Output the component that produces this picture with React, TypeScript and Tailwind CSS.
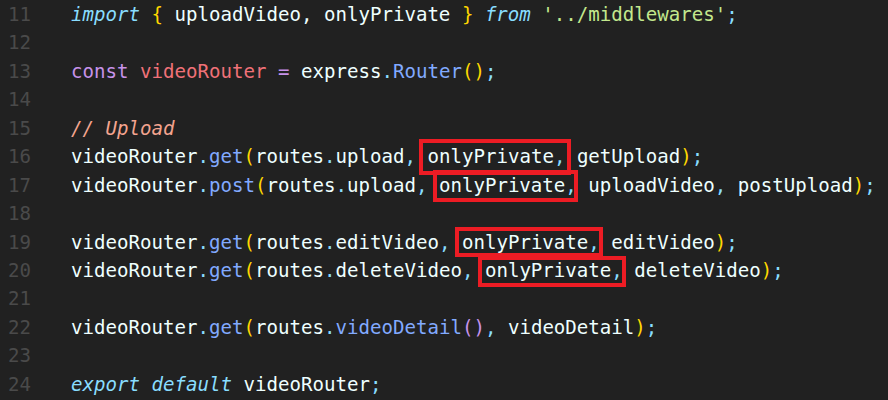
import React from "react";

const W = "text-[#eeffff]";
const KW = "text-[#89ddff] italic";
const P = "text-[#89ddff]";
const FN = "text-[#82aaff]";
const BR = "text-[#ffd700]";
const STR = "text-[#c3e88d]";
const PUR = "text-[#c792ea]";
const RED = "text-[#f07178]";
const CM = "text-[#f4a48f] italic";

// a red annotation box drawn round one token
const Marked = ({ text, box }: { text: string; box: string }) => (
  <span className="relative">
    <span className={W}>{text}</span>
    <span className={P}>,</span>
    <span className={`absolute border-4 border-[#ed1c24] ${box}`} />
  </span>
);

const lines: { n: number; toks: React.ReactNode }[] = [
  {
    n: 11,
    toks: (
      <>
        <span className={KW}>import</span> <span className={BR}>{"{"}</span>
        <span className={W}> uploadVideo, onlyPrivate </span>
        <span className={BR}>{"}"}</span> <span className={KW}>from</span>{" "}
        <span className={STR}>'../middlewares'</span>
        <span className={P}>;</span>
      </>
    ),
  },
  { n: 12, toks: null },
  {
    n: 13,
    toks: (
      <>
        <span className={PUR}>const</span> <span className={RED}>videoRouter</span>{" "}
        <span className={PUR}>=</span> <span className={W}>express</span>
        <span className={P}>.</span>
        <span className={FN}>Router</span>
        <span className={BR}>()</span>
        <span className={P}>;</span>
      </>
    ),
  },
  { n: 14, toks: null },
  { n: 15, toks: <span className={CM}>// Upload</span> },
  {
    n: 16,
    toks: (
      <>
        <span className={W}>videoRouter</span>
        <span className={P}>.</span>
        <span className={FN}>get</span>
        <span className={BR}>(</span>
        <span className={W}>routes</span>
        <span className={P}>.</span>
        <span className={W}>upload</span>
        <span className={P}>,</span>{" "}
        <Marked text="onlyPrivate" box="-left-[8px] -right-[6px] -top-[6px] -bottom-[7px]" />{" "}
        <span className={W}>getUpload</span>
        <span className={BR}>)</span>
        <span className={P}>;</span>
      </>
    ),
  },
  {
    n: 17,
    toks: (
      <>
        <span className={W}>videoRouter</span>
        <span className={P}>.</span>
        <span className={FN}>post</span>
        <span className={BR}>(</span>
        <span className={W}>routes</span>
        <span className={P}>.</span>
        <span className={W}>upload</span>
        <span className={P}>,</span>{" "}
        <Marked text="onlyPrivate" box="-left-[6px] -right-[1px] -top-[4px] -bottom-[5px]" />{" "}
        <span className={W}>uploadVideo</span>
        <span className={P}>,</span> <span className={W}>postUpload</span>
        <span className={BR}>)</span>
        <span className={P}>;</span>
      </>
    ),
  },
  { n: 18, toks: null },
  {
    n: 19,
    toks: (
      <>
        <span className={W}>videoRouter</span>
        <span className={P}>.</span>
        <span className={FN}>get</span>
        <span className={BR}>(</span>
        <span className={W}>routes</span>
        <span className={P}>.</span>
        <span className={W}>editVideo</span>
        <span className={P}>,</span>{" "}
        <Marked text="onlyPrivate" box="-left-[7px] -right-[3px] -top-[4px] -bottom-[3px]" />{" "}
        <span className={W}>editVideo</span>
        <span className={BR}>)</span>
        <span className={P}>;</span>
      </>
    ),
  },
  {
    n: 20,
    toks: (
      <>
        <span className={W}>videoRouter</span>
        <span className={P}>.</span>
        <span className={FN}>get</span>
        <span className={BR}>(</span>
        <span className={W}>routes</span>
        <span className={P}>.</span>
        <span className={W}>deleteVideo</span>
        <span className={P}>,</span>{" "}
        <Marked text="onlyPrivate" box="-left-[7px] -right-[3px] -top-[3px] -bottom-[5px]" />{" "}
        <span className={W}>deleteVideo</span>
        <span className={BR}>)</span>
        <span className={P}>;</span>
      </>
    ),
  },
  { n: 21, toks: null },
  {
    n: 22,
    toks: (
      <>
        <span className={W}>videoRouter</span>
        <span className={P}>.</span>
        <span className={FN}>get</span>
        <span className={BR}>(</span>
        <span className={W}>routes</span>
        <span className={P}>.</span>
        <span className={FN}>videoDetail</span>
        <span className={PUR}>()</span>
        <span className={P}>,</span> <span className={W}>videoDetail</span>
        <span className={BR}>)</span>
        <span className={P}>;</span>
      </>
    ),
  },
  { n: 23, toks: null },
  {
    n: 24,
    toks: (
      <>
        <span className={KW}>export</span> <span className={KW}>default</span>{" "}
        <span className={W}>videoRouter</span>
        <span className={P}>;</span>
      </>
    ),
  },
];

const App = () => {
  return (
    <div className="w-[888px] h-[400px] overflow-hidden bg-[#212121] pt-[1px] font-['DejaVu_Sans_Mono',monospace] text-[19.1px]">
      {lines.map((l) => (
        <div key={l.n} className="flex h-[28.46px] items-center whitespace-pre">
          <span className="w-[31px] text-right text-[#4a4a4a]">{l.n}</span>
          <span className="ml-[40px]">{l.toks}</span>
        </div>
      ))}
    </div>
  );
};

export default App;
